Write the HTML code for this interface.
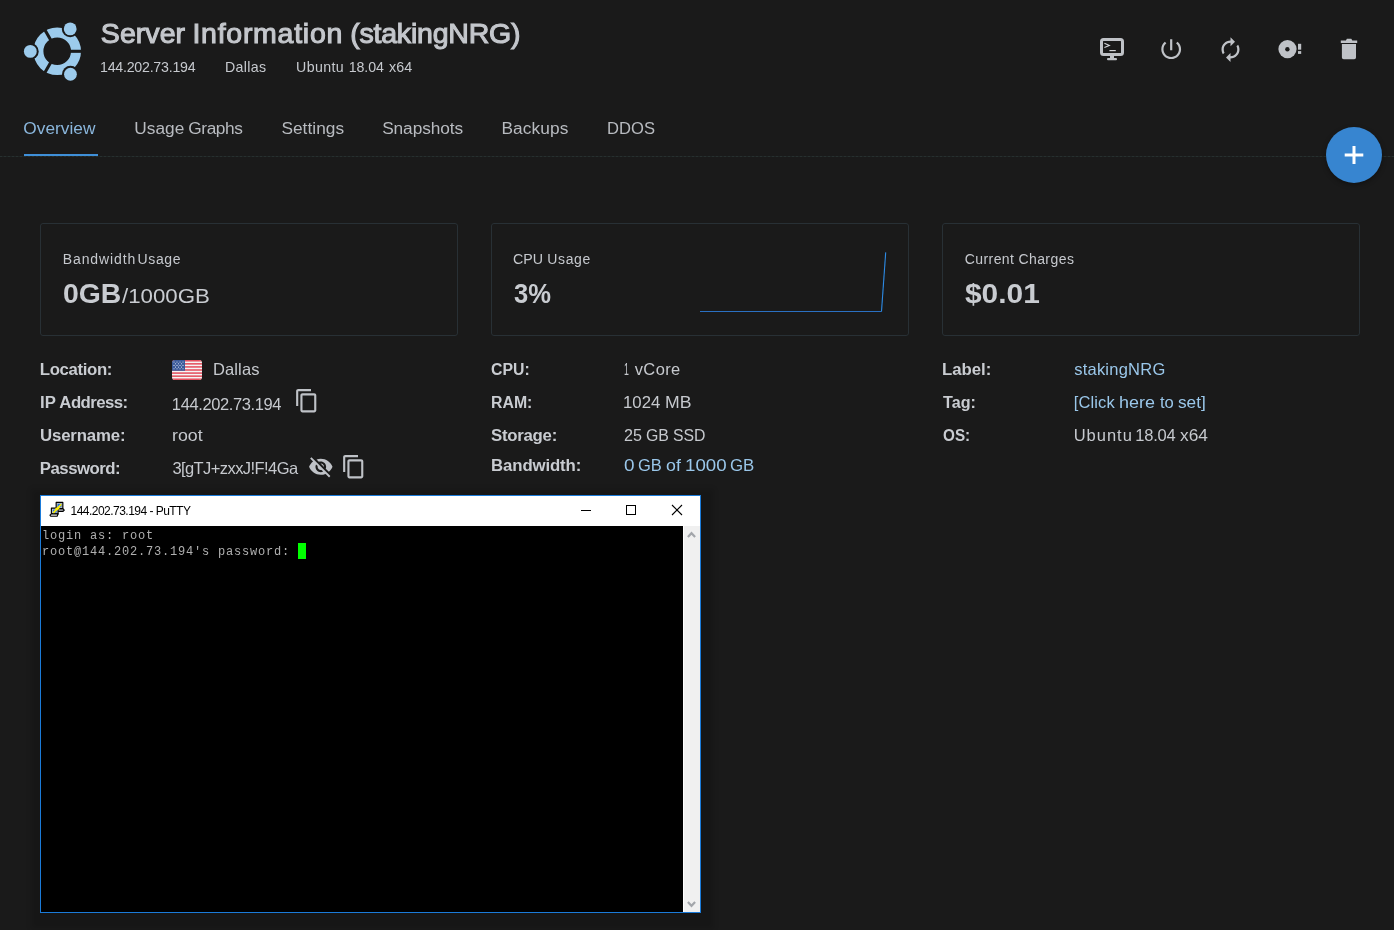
<!DOCTYPE html>
<html lang="en">
<head>
<meta charset="utf-8">
<title>Server Information (stakingNRG)</title>
<style>
html,body{margin:0;padding:0;}
body{width:1394px;height:930px;overflow:hidden;background:#1a1a1a;color:#c6c9ce;font-family:"Liberation Sans",sans-serif;position:relative;}
.abs{position:absolute;white-space:nowrap;line-height:1;}
.ph{position:absolute;white-space:nowrap;font-size:0;line-height:1;}
.w{display:inline-block;line-height:1;transform-origin:0 0;white-space:nowrap;}
.ttl{color:#c4c7cc;-webkit-text-stroke:1.1px #c4c7cc;}
.sub{color:#c6c9ce;}
.tab{color:#b8bbc0;}
.tab.active{color:#8ab6dc;}
#tabline{position:absolute;left:24px;top:154px;width:74px;height:2px;background:#3f8fd8;}
#sep{position:absolute;left:0;top:156px;width:1394px;height:1px;background:repeating-linear-gradient(90deg,#27302f 0 2px,#1f2424 2px 4px);}
#fab{position:absolute;left:1326px;top:127px;width:56px;height:56px;border-radius:50%;background:#3785d0;box-shadow:0 2px 5px rgba(0,0,0,.35);}
.card{position:absolute;top:223px;width:416px;height:111px;border:1px solid #283035;border-radius:3px;}
.clabel{color:#c6c9ce;}
.cval{font-weight:bold;color:#c9ccd1;}
.cval2{color:#c9ccd1;}
.lbl{font-weight:bold;color:#c9ccd1;}
.val{color:#c6c9ce;}
.link{color:#9ac7ea;}
.pt{color:#000;}
.icon{position:absolute;fill:#bcbfc4;}
</style>
</head>
<body>
<div id="root" style="position:absolute;left:0;top:0;width:1394px;height:930px;will-change:transform">
<header class="hdr">
<div class="ph" style="left:100.86px;top:19px"><span id="title" class="w ttl" style="font-size:28.5px;width:91.57px;letter-spacing:0.054px">Server</span> <span id="title2" class="w ttl" style="font-size:28.5px;width:157.73px;letter-spacing:0.734px">Information</span> <span id="title3" class="w ttl" style="font-size:28.5px;letter-spacing:-0.204px">(stakingNRG)</span></div>
<div class="ph" style="left:99.97px;top:60px"><span id="s1" class="w sub" style="font-size:14.2px;letter-spacing:-0.230px">144.202.73.194</span></div>
<div class="ph" style="left:224.89px;top:60px"><span id="s2" class="w sub" style="font-size:14.2px;letter-spacing:0.348px">Dallas</span></div>
<div class="ph" style="left:296.12px;top:60px"><span id="s3_0" class="w sub" style="font-size:14.2px;width:52.57px;letter-spacing:0.341px">Ubuntu</span> <span id="s3_1" class="w sub" style="font-size:14.2px;width:40.13px;letter-spacing:-0.055px">18.04</span> <span id="s3_2" class="w sub" style="font-size:14.2px;transform:scaleX(1.0105)">x64</span></div>
</header>
<nav class="tabs">
<div class="ph" style="left:23.37px;top:120px"><span id="t1" class="w tab active" style="font-size:17.3px;letter-spacing:0.010px">Overview</span></div>
<div class="ph" style="left:134.15px;top:120px"><span id="t2_0" class="w tab" style="font-size:17.3px;width:54.21px;letter-spacing:0.068px">Usage</span> <span id="t2_1" class="w tab" style="font-size:17.3px;letter-spacing:-0.427px">Graphs</span></div>
<div class="ph" style="left:281.40px;top:120px"><span id="t3" class="w tab" style="font-size:17.3px;letter-spacing:0.039px">Settings</span></div>
<div class="ph" style="left:382.14px;top:120px"><span id="t4" class="w tab" style="font-size:17.3px;letter-spacing:-0.077px">Snapshots</span></div>
<div class="ph" style="left:501.44px;top:120px"><span id="t5" class="w tab" style="font-size:17.3px;letter-spacing:0.115px">Backups</span></div>
<div class="ph" style="left:606.73px;top:120px"><span id="t6" class="w tab" style="font-size:17.3px;transform:scaleX(0.9604)">DDOS</span></div>
</nav>
<section class="stats">
<div class="ph" style="left:62.78px;top:252px"><span id="c1_0" class="w clabel" style="font-size:14px;width:74.82px;letter-spacing:0.888px">Bandwidth</span> <span id="c1_1" class="w clabel" style="font-size:14px;letter-spacing:0.630px">Usage</span></div>
<div class="ph" style="left:513.49px;top:252px"><span id="c2_0" class="w clabel" style="font-size:14px;width:33.86px;transform:scaleX(1.0170)">CPU</span> <span id="c2_1" class="w clabel" style="font-size:14px;letter-spacing:0.605px">Usage</span></div>
<div class="ph" style="left:964.82px;top:252px"><span id="c3_0" class="w clabel" style="font-size:14px;width:53.60px;letter-spacing:0.405px">Current</span> <span id="c3_1" class="w clabel" style="font-size:14px;letter-spacing:0.426px">Charges</span></div>
<div class="ph" style="left:62.81px;top:280px"><span id="v1" class="w cval" style="font-size:27.5px;width:58.78px;transform:scaleX(1.0324)">0GB</span><span id="v1b" class="w cval2" style="font-size:19.3px;transform:scaleX(1.1554)">/1000GB</span></div>
<div class="ph" style="left:514.37px;top:280px"><span id="v2" class="w cval" style="font-size:27.5px;transform:scaleX(0.9311)">3%</span></div>
<div class="ph" style="left:965.14px;top:280px"><span id="v3" class="w cval" style="font-size:27.5px;transform:scaleX(1.0865)">$0.01</span></div>
</section>
<section class="info">
<div class="ph" style="left:39.85px;top:362px"><span id="l1" class="w lbl" style="font-size:16.8px;letter-spacing:-0.368px">Location:</span></div>
<div class="ph" style="left:39.74px;top:395px"><span id="l2_0" class="w lbl" style="font-size:16.8px;width:19.63px;transform:scaleX(0.9970)">IP</span> <span id="l2_1" class="w lbl" style="font-size:16.8px;letter-spacing:-0.565px">Address:</span></div>
<div class="ph" style="left:39.96px;top:428px"><span id="l3" class="w lbl" style="font-size:16.8px;letter-spacing:-0.137px">Username:</span></div>
<div class="ph" style="left:39.85px;top:461px"><span id="l4" class="w lbl" style="font-size:16.8px;letter-spacing:-0.500px">Password:</span></div>
<div class="ph" style="left:212.97px;top:361px"><span id="a1" class="w val" style="font-size:16.5px;letter-spacing:0.129px">Dallas</span></div>
<div class="ph" style="left:171.87px;top:396px"><span id="a2" class="w val" style="font-size:16.5px;letter-spacing:-0.396px">144.202.73.194</span></div>
<div class="ph" style="left:171.71px;top:427px"><span id="a3" class="w val" style="font-size:16.5px;transform:scaleX(1.0763)">root</span></div>
<div class="ph" style="left:172.39px;top:460px"><span id="a4" class="w val" style="font-size:16.5px;letter-spacing:-0.574px">3[gTJ+zxxJ!F!4Ga</span></div>
<div class="ph" style="left:490.72px;top:362px"><span id="l5" class="w lbl" style="font-size:16.8px;transform:scaleX(0.9426)">CPU:</span></div>
<div class="ph" style="left:491.40px;top:395px"><span id="l6" class="w lbl" style="font-size:16.8px;transform:scaleX(0.9438)">RAM:</span></div>
<div class="ph" style="left:491.08px;top:428px"><span id="l7" class="w lbl" style="font-size:16.8px;letter-spacing:-0.275px">Storage:</span></div>
<div class="ph" style="left:491.10px;top:458px"><span id="l8" class="w lbl" style="font-size:16.8px;letter-spacing:-0.133px">Bandwidth:</span></div>
<div class="ph" style="left:623.63px;top:361px"><span id="b1_0" class="w val" style="font-size:16.5px;width:11.09px;transform:scaleX(0.5331)">1</span> <span id="b1_1" class="w val" style="font-size:16.5px;letter-spacing:0.388px">vCore</span></div>
<div class="ph" style="left:622.71px;top:394px"><span id="b2_0" class="w val" style="font-size:16.5px;width:41.96px;transform:scaleX(1.0157)">1024</span> <span id="b2_1" class="w val" style="font-size:16.5px;transform:scaleX(1.0686)">MB</span></div>
<div class="ph" style="left:623.58px;top:427px"><span id="b3_0" class="w val" style="font-size:16.5px;width:22.76px;transform:scaleX(0.9790)">25</span> <span id="b3_1" class="w val" style="font-size:16.5px;width:27.04px;transform:scaleX(0.9639)">GB</span> <span id="b3_2" class="w val" style="font-size:16.5px;transform:scaleX(0.9576)">SSD</span></div>
<div class="ph" style="left:623.60px;top:457px"><span id="b4_0" class="w val link" style="font-size:16.5px;width:14.75px;transform:scaleX(1.1462)">0</span> <span id="b4_1" class="w val link" style="font-size:16.5px;width:27.72px;transform:scaleX(0.9994)">GB</span> <span id="b4_2" class="w val link" style="font-size:16.5px;width:18.62px;transform:scaleX(1.0764)">of</span> <span id="b4_3" class="w val link" style="font-size:16.5px;width:45.64px;transform:scaleX(1.1335)">1000</span> <span id="b4_4" class="w val link" style="font-size:16.5px;transform:scaleX(1.0203)">GB</span></div>
<div class="ph" style="left:941.97px;top:362px"><span id="l9" class="w lbl" style="font-size:16.8px;letter-spacing:-0.011px">Label:</span></div>
<div class="ph" style="left:942.96px;top:395px"><span id="l10" class="w lbl" style="font-size:16.8px;transform:scaleX(0.9614)">Tag:</span></div>
<div class="ph" style="left:942.57px;top:428px"><span id="l11" class="w lbl" style="font-size:16.8px;transform:scaleX(0.9105)">OS:</span></div>
<div class="ph" style="left:1074.15px;top:361px"><span id="d1" class="w val link" style="font-size:16.5px;letter-spacing:0.242px">stakingNRG</span></div>
<div class="ph" style="left:1073.73px;top:394px"><span id="d2_0" class="w val link" style="font-size:16.5px;width:45.09px;letter-spacing:0.115px">[Click</span> <span id="d2_1" class="w val link" style="font-size:16.5px;width:40.76px;transform:scaleX(1.0890)">here</span> <span id="d2_2" class="w val link" style="font-size:16.5px;width:18.24px;transform:scaleX(1.0072)">to</span> <span id="d2_3" class="w val link" style="font-size:16.5px;transform:scaleX(1.0448)">set]</span></div>
<div class="ph" style="left:1073.69px;top:427px"><span id="d3_0" class="w val" style="font-size:16.5px;width:61.45px;letter-spacing:0.982px">Ubuntu</span> <span id="d3_1" class="w val" style="font-size:16.5px;width:45.02px;letter-spacing:-0.165px">18.04</span> <span id="d3_2" class="w val" style="font-size:16.5px;transform:scaleX(1.0506)">x64</span></div>
</section>
<!-- chrome -->
<div id="sep"></div>
<div id="tabline"></div>
<div id="fab"><svg width="56" height="56" viewBox="0 0 56 56" style="display:block"><path d="M18.7 28h18.6M28 19v18" stroke="#fff" stroke-width="3" fill="none"/></svg></div>
<div class="card" style="left:40px"></div>
<div class="card" style="left:491px"></div>
<div class="card" style="left:942px"></div>

<!-- ubuntu logo -->
<svg class="abs" style="left:20px;top:15px" width="70" height="70" viewBox="20 15 70 70">
<defs><mask id="lm" maskUnits="userSpaceOnUse" x="20" y="15" width="70" height="70"><rect x="20" y="15" width="70" height="70" fill="#fff"/>
<g stroke="#000" stroke-width="3.1" fill="#000">
<line x1="57.2" y1="51.3" x2="87.2" y2="51.3"/>
<line x1="57.2" y1="51.3" x2="42.2" y2="25.32"/>
<line x1="57.2" y1="51.3" x2="42.2" y2="77.28"/>
<circle cx="30.3" cy="51.4" r="8.4" stroke="none"/>
<circle cx="70.2" cy="28.9" r="8.4" stroke="none"/>
<circle cx="70.45" cy="74.25" r="8.4" stroke="none"/>
</g></mask></defs>
<circle cx="57.2" cy="51.3" r="18.8" fill="none" stroke="#9ccbec" stroke-width="10" mask="url(#lm)"/>
<circle cx="30.3" cy="51.4" r="6.4" fill="#9ccbec"/>
<circle cx="70.2" cy="28.9" r="6.4" fill="#9ccbec"/>
<circle cx="70.45" cy="74.25" r="6.4" fill="#9ccbec"/>
</svg>

<!-- action icons -->
<svg class="abs" style="left:1095px;top:33px" width="34" height="32" viewBox="1095 33 34 32">
<rect x="1101.5" y="39.5" width="21" height="15" rx="2" fill="none" stroke="#bfc2c7" stroke-width="3"/>
<rect x="1110" y="55.5" width="4" height="3" fill="#bfc2c7"/>
<rect x="1107" y="58" width="10" height="2.2" rx="1" fill="#bfc2c7"/>
<path d="M1104.4 43.2l5 2.2l-5 2.2" fill="none" stroke="#d4d6da" stroke-width="1.1"/>
<path d="M1109.4 50.6h6.4" fill="none" stroke="#d4d6da" stroke-width="1.2"/>
</svg>
<svg class="abs" style="left:1158.1px;top:36.1px" width="26.4" height="26.4" viewBox="0 0 24 24" fill="#bfc2c7"><path d="M13 3h-2v10h2V3zm4.83 2.17l-1.42 1.42C17.99 7.86 19 9.81 19 12c0 3.87-3.13 7-7 7s-7-3.13-7-7c0-2.19 1.01-4.14 2.58-5.42L6.17 5.17C4.23 6.82 3 9.26 3 12c0 4.97 4.03 9 9 9s9-4.03 9-9c0-2.74-1.23-5.18-3.17-6.83z"/></svg>
<svg class="abs" style="left:1217.1px;top:36.1px" width="27" height="27" viewBox="0 0 24 24" fill="#bfc2c7"><path d="M12 6v3l4-4-4-4v3c-4.42 0-8 3.58-8 8 0 1.57.46 3.03 1.24 4.26L6.7 14.8c-.45-.83-.7-1.79-.7-2.8 0-3.31 2.69-6 6-6zm6.76 1.74L17.3 9.2c.44.84.7 1.79.7 2.8 0 3.31-2.69 6-6 6v-3l-4 4 4 4v-3c4.42 0 8-3.58 8-8 0-1.57-.46-3.03-1.24-4.26z"/></svg>
<svg class="abs" style="left:1275px;top:36px" width="30" height="27" viewBox="1275 36 30 27">
<circle cx="1287.5" cy="49.1" r="9.1" fill="#bfc2c7"/><circle cx="1287.4" cy="49.2" r="2.2" fill="#1a1a1a"/>
<rect x="1298" y="43.8" width="3.2" height="5.9" fill="#bfc2c7"/><rect x="1298" y="51.1" width="3.2" height="2.8" fill="#bfc2c7"/>
</svg>
<svg class="abs" style="left:1335px;top:33px" width="28" height="32" viewBox="1335 33 28 32" fill="#bfc2c7">
<path d="M1340.800 40.500h5.100l1-1.700h4.400l1 1.700h4.900v2.500h-16.400z"/>
<path d="M1341.900 43.900h14.100v13.500a1.800 1.800 0 0 1-1.800 1.800h-10.500a1.800 1.800 0 0 1-1.800-1.800z"/>
</svg>

<!-- sparkline -->
<svg class="abs" style="left:695px;top:245px" width="200" height="75" viewBox="695 245 200 75"><path d="M700 311.5H881.5" fill="none" stroke="#2a70c2" stroke-width="1"/><path d="M881.5 311.5L885.7 252.4" fill="none" stroke="#2d8be6" stroke-width="1.1"/></svg>

<!-- flag -->
<svg class="abs" style="left:172px;top:360px" width="30" height="20" viewBox="0 0 30 20">
<defs><clipPath id="fc"><rect width="30" height="20" rx="3"/></clipPath></defs>
<g clip-path="url(#fc)"><rect width="30" height="20" fill="#f5f5f5"/>
<g fill="#e4505f"><rect y="0" width="30" height="1.54"/><rect y="3.08" width="30" height="1.54"/><rect y="6.15" width="30" height="1.54"/><rect y="9.23" width="30" height="1.54"/><rect y="12.31" width="30" height="1.54"/><rect y="15.38" width="30" height="1.54"/><rect y="18.46" width="30" height="1.54"/></g>
<rect width="13" height="10.8" fill="#3b5a9a"/>
<g fill="#dfe6f2"><circle cx="2" cy="2" r=".55"/><circle cx="5" cy="2" r=".55"/><circle cx="8" cy="2" r=".55"/><circle cx="11" cy="2" r=".55"/><circle cx="3.5" cy="3.7" r=".55"/><circle cx="6.5" cy="3.7" r=".55"/><circle cx="9.5" cy="3.7" r=".55"/><circle cx="2" cy="5.4" r=".55"/><circle cx="5" cy="5.4" r=".55"/><circle cx="8" cy="5.4" r=".55"/><circle cx="11" cy="5.4" r=".55"/><circle cx="3.5" cy="7.1" r=".55"/><circle cx="6.5" cy="7.1" r=".55"/><circle cx="9.5" cy="7.1" r=".55"/><circle cx="2" cy="8.8" r=".55"/><circle cx="5" cy="8.8" r=".55"/><circle cx="8" cy="8.8" r=".55"/><circle cx="11" cy="8.8" r=".55"/></g>
</g></svg>

<!-- copy / eye icons -->
<svg class="abs" style="left:294.1px;top:387.7px" width="25.500" height="25.500" viewBox="0 0 24 24" fill="#bfc2c7"><path d="M16 1H4c-1.1 0-2 .9-2 2v14h2V3h12V1zm3 4H8c-1.1 0-2 .9-2 2v14c0 1.1.9 2 2 2h11c1.1 0 2-.9 2-2V7c0-1.1-.9-2-2-2zm0 16H8V7h11v14z"/></svg>
<svg class="abs" style="left:340.6px;top:453.8px" width="25.500" height="25.500" viewBox="0 0 24 24" fill="#bfc2c7"><path d="M16 1H4c-1.1 0-2 .9-2 2v14h2V3h12V1zm3 4H8c-1.1 0-2 .9-2 2v14c0 1.1.9 2 2 2h11c1.1 0 2-.9 2-2V7c0-1.1-.9-2-2-2zm0 16H8V7h11v14z"/></svg>
<svg class="abs" style="left:307.8px;top:453.9px" width="25.6" height="25.6" viewBox="0 0 24 24" fill="#bfc2c7"><path d="M12 7c2.76 0 5 2.24 5 5 0 .65-.13 1.26-.36 1.83l2.92 2.92c1.51-1.26 2.7-2.89 3.43-4.75-1.73-4.39-6-7.5-11-7.5-1.4 0-2.74.25-3.98.7l2.16 2.16C10.74 7.13 11.35 7 12 7zM2 4.27l2.28 2.28.46.46C3.08 8.3 1.78 10.02 1 12c1.73 4.39 6 7.5 11 7.5 1.55 0 3.03-.3 4.38-.84l.42.42L19.73 22 21 20.73 3.27 3 2 4.27zM7.53 9.8l1.55 1.55c-.05.21-.08.43-.08.65 0 1.66 1.34 3 3 3 .22 0 .44-.03.65-.08l1.55 1.55c-.67.33-1.41.53-2.2.53-2.76 0-5-2.24-5-5 0-.79.2-1.53.53-2.2zm4.31-.78l3.15 3.15.02-.16c0-1.66-1.34-3-3-3l-.17.01z"/></svg>

<!-- putty window -->
<div id="putty" style="position:absolute;left:40px;top:495px;width:659px;height:416px;border:1px solid #1b7bd9;background:#000;box-shadow:2px 5px 5px 11px rgba(0,0,0,.13);">
  <div id="ptitle" style="position:absolute;left:0;top:0;width:659px;height:30px;background:#fff;"></div>
  <div id="pscroll" style="position:absolute;left:642px;top:30px;width:17px;height:386px;background:#f0f0f0;border-left:1px solid #fff;box-sizing:border-box"></div>
  <svg class="abs" style="left:7.6px;top:5.3px" width="17.2" height="17.2" viewBox="0 0 18 18">
    <g stroke="#000" stroke-width="1.2" stroke-linejoin="round">
    <path d="M7.5 1.5h7v6.5h-7z" fill="#b9bcc0"/><path d="M7.5 8h7l1.5 1.5-1.5 1.5h-5.5z" fill="#8f9296"/>
    <path d="M2.5 7.5h7v6h-7z" fill="#c9ccd0"/><path d="M2.5 13.5h7l-1 2.5h-6.5l-1-1.200z" fill="#e8e8e8"/>
    </g>
    <rect x="9" y="3" width="4" height="3.4" fill="#1f6fd6"/><rect x="4" y="9" width="4" height="3.2" fill="#1f6fd6"/>
    <path d="M4.500 12.500L12.800 3.400" stroke="#ffee00" stroke-width="1.800" fill="none"/><path d="M7 8.800l3.600-1.600" stroke="#ffee00" stroke-width="2.600"/>
  </svg>
  <svg class="abs" style="left:530px;top:0" width="129" height="30" viewBox="571 496 129 30">
    <path d="M581 510.500h10" stroke="#000" stroke-width="1" fill="none"/>
    <rect x="626.500" y="505.500" width="9" height="9" stroke="#000" stroke-width="1" fill="none"/>
    <path d="M672 505l10 10M682 505l-10 10" stroke="#000" stroke-width="1.100" fill="none"/>
  </svg>
  <svg class="abs" style="left:642px;top:30px" width="17" height="386" viewBox="0 0 17 386">
    <path d="M4.900 11l3.600-3.800 3.600 3.800" stroke="#a3a6ab" stroke-width="2.200" fill="none"/>
    <path d="M4.900 376l3.600 3.800 3.600-3.800" stroke="#a3a6ab" stroke-width="2.200" fill="none"/>
  </svg>
  <div id="term" class="abs" style="left:1px;top:32px;font-family:'Liberation Mono',monospace;font-size:12px;letter-spacing:0.8px;line-height:16px;color:#b0b0b0;white-space:pre">login as: root
root@144.202.73.194's password: </div>
  <div id="cursor" style="position:absolute;left:257px;top:47px;width:8px;height:16px;background:#00ff00"></div>
</div>
<div class="wintitle">
<div class="ph" style="left:70.56px;top:505px"><span id="pt" class="w pt" style="font-size:12px;letter-spacing:-0.526px">144.202.73.194 - PuTTY</span></div>
</div>
</div>
</body>
</html>
